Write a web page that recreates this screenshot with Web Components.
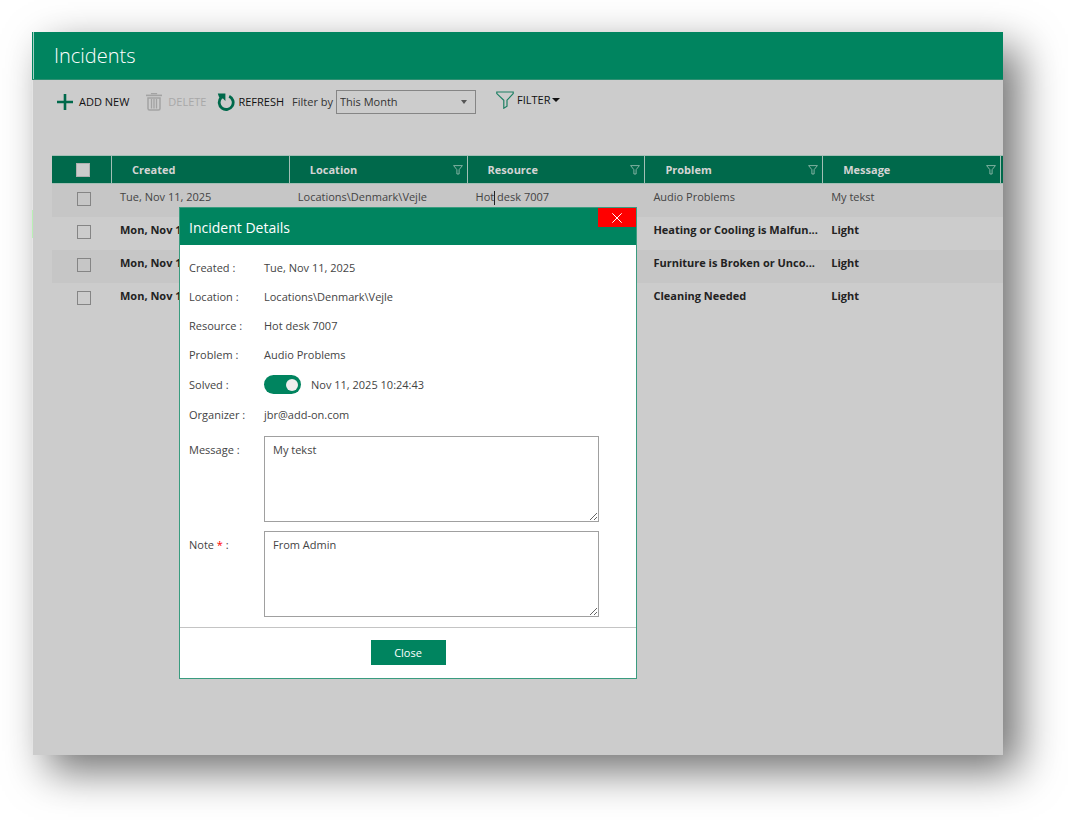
<!DOCTYPE html>
<html lang="en">
<head>
<meta charset="UTF-8">
<meta name="viewport" content="width=device-width, initial-scale=1.0">
<title>Incidents</title>
<style>
    :root {
        --green: #00845f;
        --green-dark: #00694b;
        --page: #cccccc;
        --stripe: #c6c6c6;
        --text: #444444;
    }
    body {
        margin: 0;
        padding: 32px 65px 65px 32px;
        background: #ffffff;
        color: var(--text);
        font-family: "Open Sans", "Noto Sans", sans-serif;
        font-size: 11px;
        line-height: 16px;
    }
</style>
</head>
<body>
<app-window heading="Incidents">
    <tool-bar>
        <tool-button icon="plus">ADD NEW</tool-button>
        <tool-button icon="trash" disabled>DELETE</tool-button>
        <tool-button icon="refresh">REFRESH</tool-button>
        <filter-select label="Filter by" value="This Month"></filter-select>
        <tool-button icon="funnel" caret>FILTER</tool-button>
    </tool-bar>
    <incident-grid></incident-grid>
    <incident-dialog slot="dialog" heading="Incident Details">
        <detail-row label="Created :">Tue, Nov 11, 2025</detail-row>
        <detail-row label="Location :">Locations\Denmark\Vejle</detail-row>
        <detail-row label="Resource :">Hot desk 7007</detail-row>
        <detail-row label="Problem :">Audio Problems</detail-row>
        <toggle-row label="Solved :">Nov 11, 2025 10:24:43</toggle-row>
        <detail-row label="Organizer :">jbr@add-on.com</detail-row>
        <text-row slot="texts" label="Message" value="My tekst"></text-row>
        <text-row slot="texts" label="Note" value="From Admin" required></text-row>
    </incident-dialog>
</app-window>

<script>
const icons = {
    plus: '<svg width="16" height="16" viewBox="0 0 16 16"><path d="M8 0v16M0 8h16" stroke="#00694b" stroke-width="2.6" fill="none"/></svg>',
    trash: '<svg width="16" height="18" viewBox="0 0 16 18"><g fill="none" stroke="#a3a3a3"><path d="M5.5 1.2V.6h5v.6" stroke-width="1.2"/><path d="M0 2.4h16" stroke-width="1.6"/><path d="M2 5v10.5q0 1.5 1.5 1.5h9q1.5 0 1.5-1.5V5z" stroke-width="1.5"/><path d="M5.500 6v9.500M8 6v9.500M10.500 6v9.500" stroke-width="1.3"/></g></svg>',
    refresh: '<svg width="18" height="18" viewBox="0 0 18 18"><path d="M12.2 3.200A7 7 0 1 1 4 4.800" fill="none" stroke="#00694b" stroke-width="2.800"/><path d="M.8.6h7.600v7.400L6 5.600 3.600 6 1.900 3.700z" fill="#00694b"/></svg>',
    funnel: '<svg width="18" height="18" viewBox="0 0 18 18"><path d="M.8 1h16.400v1.600l-6.200 6.600v6l-3.200 2V9.200L.8 2.600z" fill="none" stroke="#1c7f62" stroke-width="1.200"/></svg>'
};
const smallFunnel = '<svg width="10" height="10" viewBox="0 0 10 10"><path d="M.6.6h8.800L6.100 4.700v4.300H3.900V4.700z" fill="none" stroke="#8fb9aa" stroke-width=".9"/></svg>';

class AppWindow extends HTMLElement {
    constructor() {
        super();
        this.attachShadow({ mode: 'open' });
    }

    connectedCallback() {
        this.shadowRoot.innerHTML = `
            <style>
                :host {
                    display: block;
                    position: relative;
                    background: var(--page);
                    box-shadow: 16px 16px 40px rgba(0,0,0,0.56);
                }
                header {
                    height: 47px;
                    display: flex;
                    align-items: center;
                    padding-left: 21px;
                    background: var(--green);
                    border-left: 1px solid var(--green);
                    border-bottom: 1px solid #2f8f72;
                    box-shadow: inset 1px 0 #a5d2c4;
                }
                h1 {
                    margin: 0;
                    font-size: 20px;
                    line-height: 28px;
                    font-weight: 300;
                    color: #ffffff;
                }
                main {
                    position: relative;
                    min-height: 675px;
                    box-sizing: border-box;
                    border-left: 1px solid #e4e4e4;
                }
                main::before {
                    content: '';
                    position: absolute;
                    left: -1px;
                    top: 130px;
                    width: 1px;
                    height: 28px;
                    background: #b9efb5;
                }
                .overlay {
                    position: absolute;
                    left: 147px;
                    top: 175px;
                }
            </style>
            <header><h1>${this.getAttribute('heading')}</h1></header>
            <main><slot></slot></main>
            <div class="overlay"><slot name="dialog"></slot></div>
        `;
    }
}

class ToolBar extends HTMLElement {
    constructor() {
        super();
        this.attachShadow({ mode: 'open' });
        this.shadowRoot.innerHTML = `
            <style>
                :host {
                    display: flex;
                    align-items: center;
                    gap: 6px;
                    height: 43px;
                    padding-left: 24px;
                }
                ::slotted([icon="plus"]) {
                    margin-right: 9px;
                }
                ::slotted([icon="trash"]) {
                    margin-right: 3px;
                }
                ::slotted([icon="funnel"]) {
                    margin: 0 0 4px 14px;
                }
            </style>
            <slot></slot>
        `;
    }
}

class ToolButton extends HTMLElement {
    constructor() {
        super();
        this.attachShadow({ mode: 'open' });
    }

    connectedCallback() {
        const caret = this.hasAttribute('caret')
            ? '<svg width="8" height="4" viewBox="0 0 8 4"><path d="M0 0h8L4 4z" fill="#111111"/></svg>'
            : '';
        this.shadowRoot.innerHTML = `
            <style>
                :host {
                    display: block;
                }
                button {
                    display: flex;
                    align-items: center;
                    padding: 0;
                    border: 0;
                    background: none;
                    font: inherit;
                    color: #111111;
                    white-space: nowrap;
                    cursor: pointer;
                }
                button:disabled {
                    color: #a8a8a8;
                    cursor: default;
                }
                span {
                    margin: 0 2px 0 3px;
                }
                :host([icon="plus"]) span, :host([icon="trash"]) span {
                    margin-left: 6px;
                }
                svg {
                    display: block;
                }
            </style>
            <button type="button" ${this.hasAttribute('disabled') ? 'disabled' : ''}>
                ${icons[this.getAttribute('icon')]}<span><slot></slot></span>${caret}
            </button>
        `;
    }
}

class FilterSelect extends HTMLElement {
    constructor() {
        super();
        this.attachShadow({ mode: 'open' });
    }

    connectedCallback() {
        this.shadowRoot.innerHTML = `
            <style>
                :host {
                    display: flex;
                    align-items: center;
                    gap: 3px;
                    color: #333333;
                }
                label {
                    white-space: nowrap;
                }
                .box {
                    display: grid;
                    align-items: center;
                }
                select, svg {
                    grid-area: 1 / 1;
                }
                select {
                    appearance: none;
                    width: 140px;
                    height: 24px;
                    padding: 0 3px;
                    border: 1px solid #858585;
                    border-radius: 0;
                    background: transparent;
                    font: inherit;
                    color: inherit;
                }
                svg {
                    justify-self: end;
                    margin-right: 9px;
                    pointer-events: none;
                }
            </style>
            <label for="period">${this.getAttribute('label')}</label>
            <div class="box">
                <select id="period"><option>${this.getAttribute('value')}</option></select>
                <svg width="6" height="4" viewBox="0 0 6 4"><path d="M0 0h6L3 4z" fill="#555555"/></svg>
            </div>
        `;
    }
}

class IncidentGrid extends HTMLElement {
    constructor() {
        super();
        this.attachShadow({ mode: 'open' });
        this.columns = ['Created', 'Location', 'Resource', 'Problem', 'Message'];
        this.rows = [
            { read: true, cells: ['Tue, Nov 11, 2025', 'Locations\\Denmark\\Vejle', 'Hot<i></i> desk 7007', 'Audio Problems', 'My tekst'] },
            { cells: ['Mon, Nov 1', '', '', 'Heating or Cooling is Malfun...', 'Light'] },
            { cells: ['Mon, Nov 1', '', '', 'Furniture is Broken or Unco...', 'Light'] },
            { cells: ['Mon, Nov 1', '', '', 'Cleaning Needed', 'Light'] }
        ];
    }

    connectedCallback() {
        const head = this.columns.map((name, index) => `
            <th scope="col"><div>${name}${index > 0 ? smallFunnel : ''}</div></th>`).join('');
        const body = this.rows.map((row, index) => `
            <tr class="${row.read ? 'read' : ''}">
                <td class="check"><input type="checkbox" aria-label="Select row ${index + 1}"></td>
                ${row.cells.map(cell => `<td>${cell}</td>`).join('')}
                <td></td>
            </tr>`).join('');

        this.shadowRoot.innerHTML = `
            <style>
                :host {
                    display: block;
                    margin: 32px 0 0 19px;
                }
                table {
                    width: 100%;
                    table-layout: fixed;
                    border-collapse: separate;
                    border-spacing: 0;
                }
                .first {
                    width: 60px;
                }
                .last {
                    width: 2px;
                }
                th {
                    box-sizing: border-box;
                    height: 29px;
                    padding: 0;
                    background: var(--green-dark);
                    border: solid #a3bfb5;
                    border-width: 1px 1px 1px 0;
                    color: #d4d4d4;
                    text-align: left;
                }
                th:last-child {
                    border-right: 0;
                }
                th div {
                    display: flex;
                    align-items: center;
                    justify-content: space-between;
                    padding: 0 4px 0 20px;
                }
                td {
                    box-sizing: border-box;
                    height: 33px;
                    padding: 5px 0 8px 8px;
                    white-space: nowrap;
                    font-weight: 700;
                    color: #222222;
                    vertical-align: top;
                }
                td:last-child {
                    padding: 0;
                }
                tr:nth-child(odd) td {
                    background: var(--stripe);
                }
                .read td {
                    font-weight: 400;
                    color: var(--text);
                }
                .check {
                    padding: 8px 0 0 3px;
                }
                input {
                    appearance: none;
                    display: block;
                    width: 14px;
                    height: 14px;
                    margin: 0 auto;
                    border: 1px solid #858585;
                    background: transparent;
                }
                th:first-child {
                    padding-left: 2px;
                }
                th input {
                    background: #cccccc;
                    border-color: #b0b0b0;
                }
                /* text cursor resting in the resource cell */
                i {
                    display: inline-block;
                    width: 1px;
                    height: 14px;
                    margin-right: -1px;
                    background: #222222;
                    vertical-align: middle;
                }
            </style>
            <table>
                <colgroup><col class="first"><col span="5"><col class="last"></colgroup>
                <thead><tr><th><input type="checkbox" aria-label="Select all"></th>${head}<th></th></tr></thead>
                <tbody>${body}</tbody>
            </table>
        `;
    }
}

class IncidentDialog extends HTMLElement {
    constructor() {
        super();
        this.attachShadow({ mode: 'open' });
    }

    connectedCallback() {
        this.shadowRoot.innerHTML = `
            <style>
                :host {
                    display: block;
                }
                section {
                    box-sizing: border-box;
                    width: 458px;
                    max-width: 100%;
                    border: 1px solid #3a9c7f;
                    background: #ffffff;
                }
                header {
                    display: flex;
                    justify-content: space-between;
                    height: 37px;
                    background: var(--green);
                }
                h2 {
                    margin: 0;
                    padding: 10px 9px 0;
                    font-size: 14px;
                    line-height: 20px;
                    font-weight: 400;
                    color: #ffffff;
                }
                .close-x {
                    display: grid;
                    place-items: center;
                    width: 38px;
                    height: 19px;
                    padding: 0;
                    border: 0;
                    background: #ff0000;
                }
                .body {
                    padding: 8px 9px 10px;
                }
                .texts {
                    display: grid;
                    gap: 9px;
                    padding-top: 7px;
                }
                footer {
                    display: flex;
                    justify-content: center;
                    padding: 12px 0 13px;
                    border-top: 1px solid #c4c4c4;
                }
                .close {
                    width: 75px;
                    height: 25px;
                    padding: 0;
                    border: 0;
                    background: var(--green);
                    font: inherit;
                    color: #ffffff;
                }
            </style>
            <section role="dialog" aria-labelledby="title">
                <header>
                    <h2 id="title">${this.getAttribute('heading')}</h2>
                    <button class="close-x" type="button" aria-label="Dismiss">
                        <svg width="10" height="10" viewBox="0 0 10 10"><path d="M.3.3l9.400 9.400M9.700.3L.3 9.700" stroke="#ffffff" fill="none"/></svg>
                    </button>
                </header>
                <div class="body">
                    <slot></slot>
                    <div class="texts"><slot name="texts"></slot></div>
                </div>
                <footer><button class="close" type="button">Close</button></footer>
            </section>
        `;
        this.shadowRoot.querySelectorAll('button').forEach(button => {
            button.addEventListener('click', () => this.remove());
        });
    }
}

const rowStyle = `
    :host {
        display: grid;
        grid-template-columns: 75px 1fr;
        align-items: center;
        min-height: 29px;
    }
`;

class DetailRow extends HTMLElement {
    constructor() {
        super();
        this.attachShadow({ mode: 'open' });
    }

    connectedCallback() {
        this.shadowRoot.innerHTML = `
            <style>${rowStyle}</style>
            <span>${this.getAttribute('label')}</span>
            <span><slot></slot></span>
        `;
    }
}

class ToggleRow extends HTMLElement {
    constructor() {
        super();
        this.attachShadow({ mode: 'open' });
    }

    connectedCallback() {
        this.shadowRoot.innerHTML = `
            <style>
                ${rowStyle}
                :host {
                    min-height: 31px;
                }
                div {
                    display: flex;
                    align-items: center;
                    gap: 10px;
                }
                input {
                    appearance: none;
                    display: flex;
                    align-items: center;
                    justify-content: flex-end;
                    box-sizing: border-box;
                    width: 37px;
                    height: 19px;
                    margin: 0;
                    padding: 0 3px;
                    border-radius: 10px;
                    background: var(--green);
                }
                input::before {
                    content: '';
                    width: 12px;
                    height: 12px;
                    border-radius: 50%;
                    background: #eeeeee;
                }
                input:not(:checked) {
                    justify-content: flex-start;
                    background: #999999;
                }
            </style>
            <label for="toggle">${this.getAttribute('label')}</label>
            <div><input id="toggle" type="checkbox" role="switch" checked><span><slot></slot></span></div>
        `;
    }
}

class TextRow extends HTMLElement {
    constructor() {
        super();
        this.attachShadow({ mode: 'open' });
    }

    connectedCallback() {
        const star = this.hasAttribute('required') ? ' <b>*</b>' : '';
        this.shadowRoot.innerHTML = `
            <style>
                ${rowStyle}
                :host {
                    align-items: start;
                    padding-right: 28px;
                }
                label {
                    padding-top: 6px;
                }
                b {
                    font-weight: 400;
                    color: #ff0000;
                }
                textarea {
                    display: block;
                    box-sizing: border-box;
                    width: 100%;
                    height: 86px;
                    margin: 0;
                    padding: 5px 8px;
                    border: 1px solid #a0a0a0;
                    font: inherit;
                    color: inherit;
                    resize: both;
                }
            </style>
            <label for="text">${this.getAttribute('label')}${star} :</label>
            <textarea id="text">${this.getAttribute('value')}</textarea>
        `;
    }
}

customElements.define('app-window', AppWindow);
customElements.define('tool-bar', ToolBar);
customElements.define('tool-button', ToolButton);
customElements.define('filter-select', FilterSelect);
customElements.define('incident-grid', IncidentGrid);
customElements.define('incident-dialog', IncidentDialog);
customElements.define('detail-row', DetailRow);
customElements.define('toggle-row', ToggleRow);
customElements.define('text-row', TextRow);
</script>
</body>
</html>
